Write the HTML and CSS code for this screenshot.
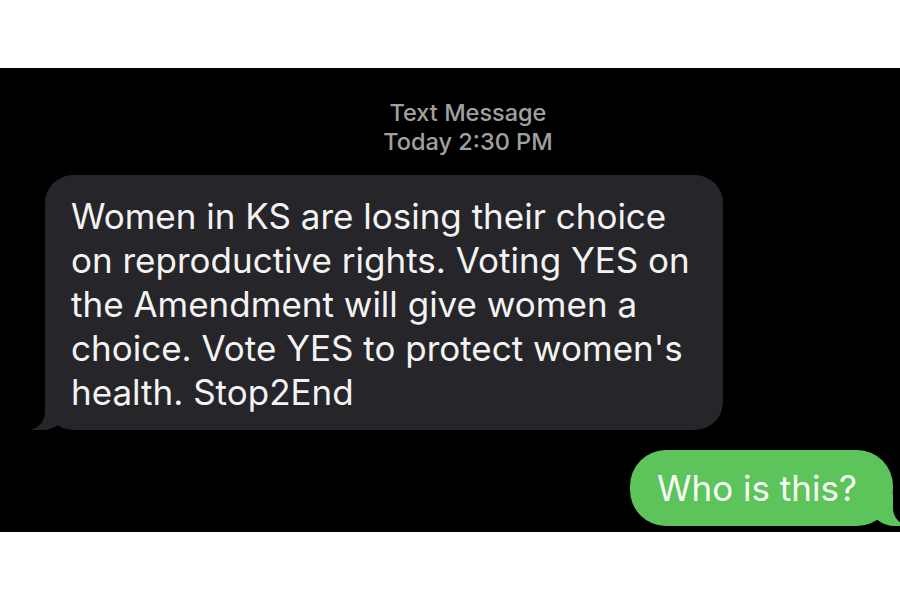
FILE: index.html
```html
<!DOCTYPE html>
<html lang="en">
<head>
    <meta charset="UTF-8">
    <meta name="viewport" content="width=device-width, initial-scale=1.0">
    <title>Text Message</title>
    <link rel="stylesheet" href="styles.css">
</head>
<body>
    <div class="screen">
        <div class="stamp">
            <div>Text Message</div>
            <div>Today 2:30 PM</div>
        </div>

        <div class="row">
            <p class="bubble them">
                Women in KS are losing their choice<br>
                on reproductive rights. Voting YES on<br>
                the Amendment will give women a<br>
                choice. Vote YES to protect women's<br>
                health. Stop2End
            </p>
        </div>

        <div class="row mine">
            <p class="bubble me">Who is this?</p>
        </div>
    </div>
</body>
</html>
```

FILE: styles.css
```css
body {
    margin: 0;
    background: #fff;
    font-family: Inter, "Liberation Sans", Arial, sans-serif;
}
.screen {
    margin-top: 68px;
    height: 464px;
    background: #000;
    padding-top: 30px;
    box-sizing: border-box;
    overflow: hidden;
}
.stamp {
    padding-left: 36px;
    text-align: center;
    color: #a0a0a0;
    font-size: 23.5px;
    font-weight: 500;
    line-height: 29px;
}
.row {
    display: flex;
    margin-top: 19px;
}
.row.mine {
    justify-content: flex-end;
    margin-top: 20px;
}
.bubble {
    position: relative;
    margin: 0;
    font-size: 35px;
    line-height: 44px;
    white-space: nowrap;
}
.them {
    margin-left: 45px;
    width: 678px;
    box-sizing: border-box;
    padding: 19px 26px 16px;
    background: #262529;
    color: #f3f3f3;
    border-radius: 28px;
}
.me {
    margin-right: 7px;
    width: 263px;
    box-sizing: border-box;
    padding: 16px 27px;
    background: #5cc45a;
    color: #f7fff6;
    border-radius: 36px;
}
/* bubble tails */
.bubble::before,
.bubble::after {
    content: "";
    position: absolute;
    bottom: 0;
    height: 32px;
}
.them::before {
    left: -13px;
    width: 34px;
    background: #262529;
    border-bottom-right-radius: 24px 20px;
}
.them::after {
    left: -40px;
    width: 40px;
    background: #000;
    border-bottom-right-radius: 18px;
}
.me::before {
    right: -12px;
    width: 34px;
    background: #5cc45a;
    border-bottom-left-radius: 24px 20px;
}
.me::after {
    right: -40px;
    width: 40px;
    background: #000;
    border-bottom-left-radius: 18px;
}
```
